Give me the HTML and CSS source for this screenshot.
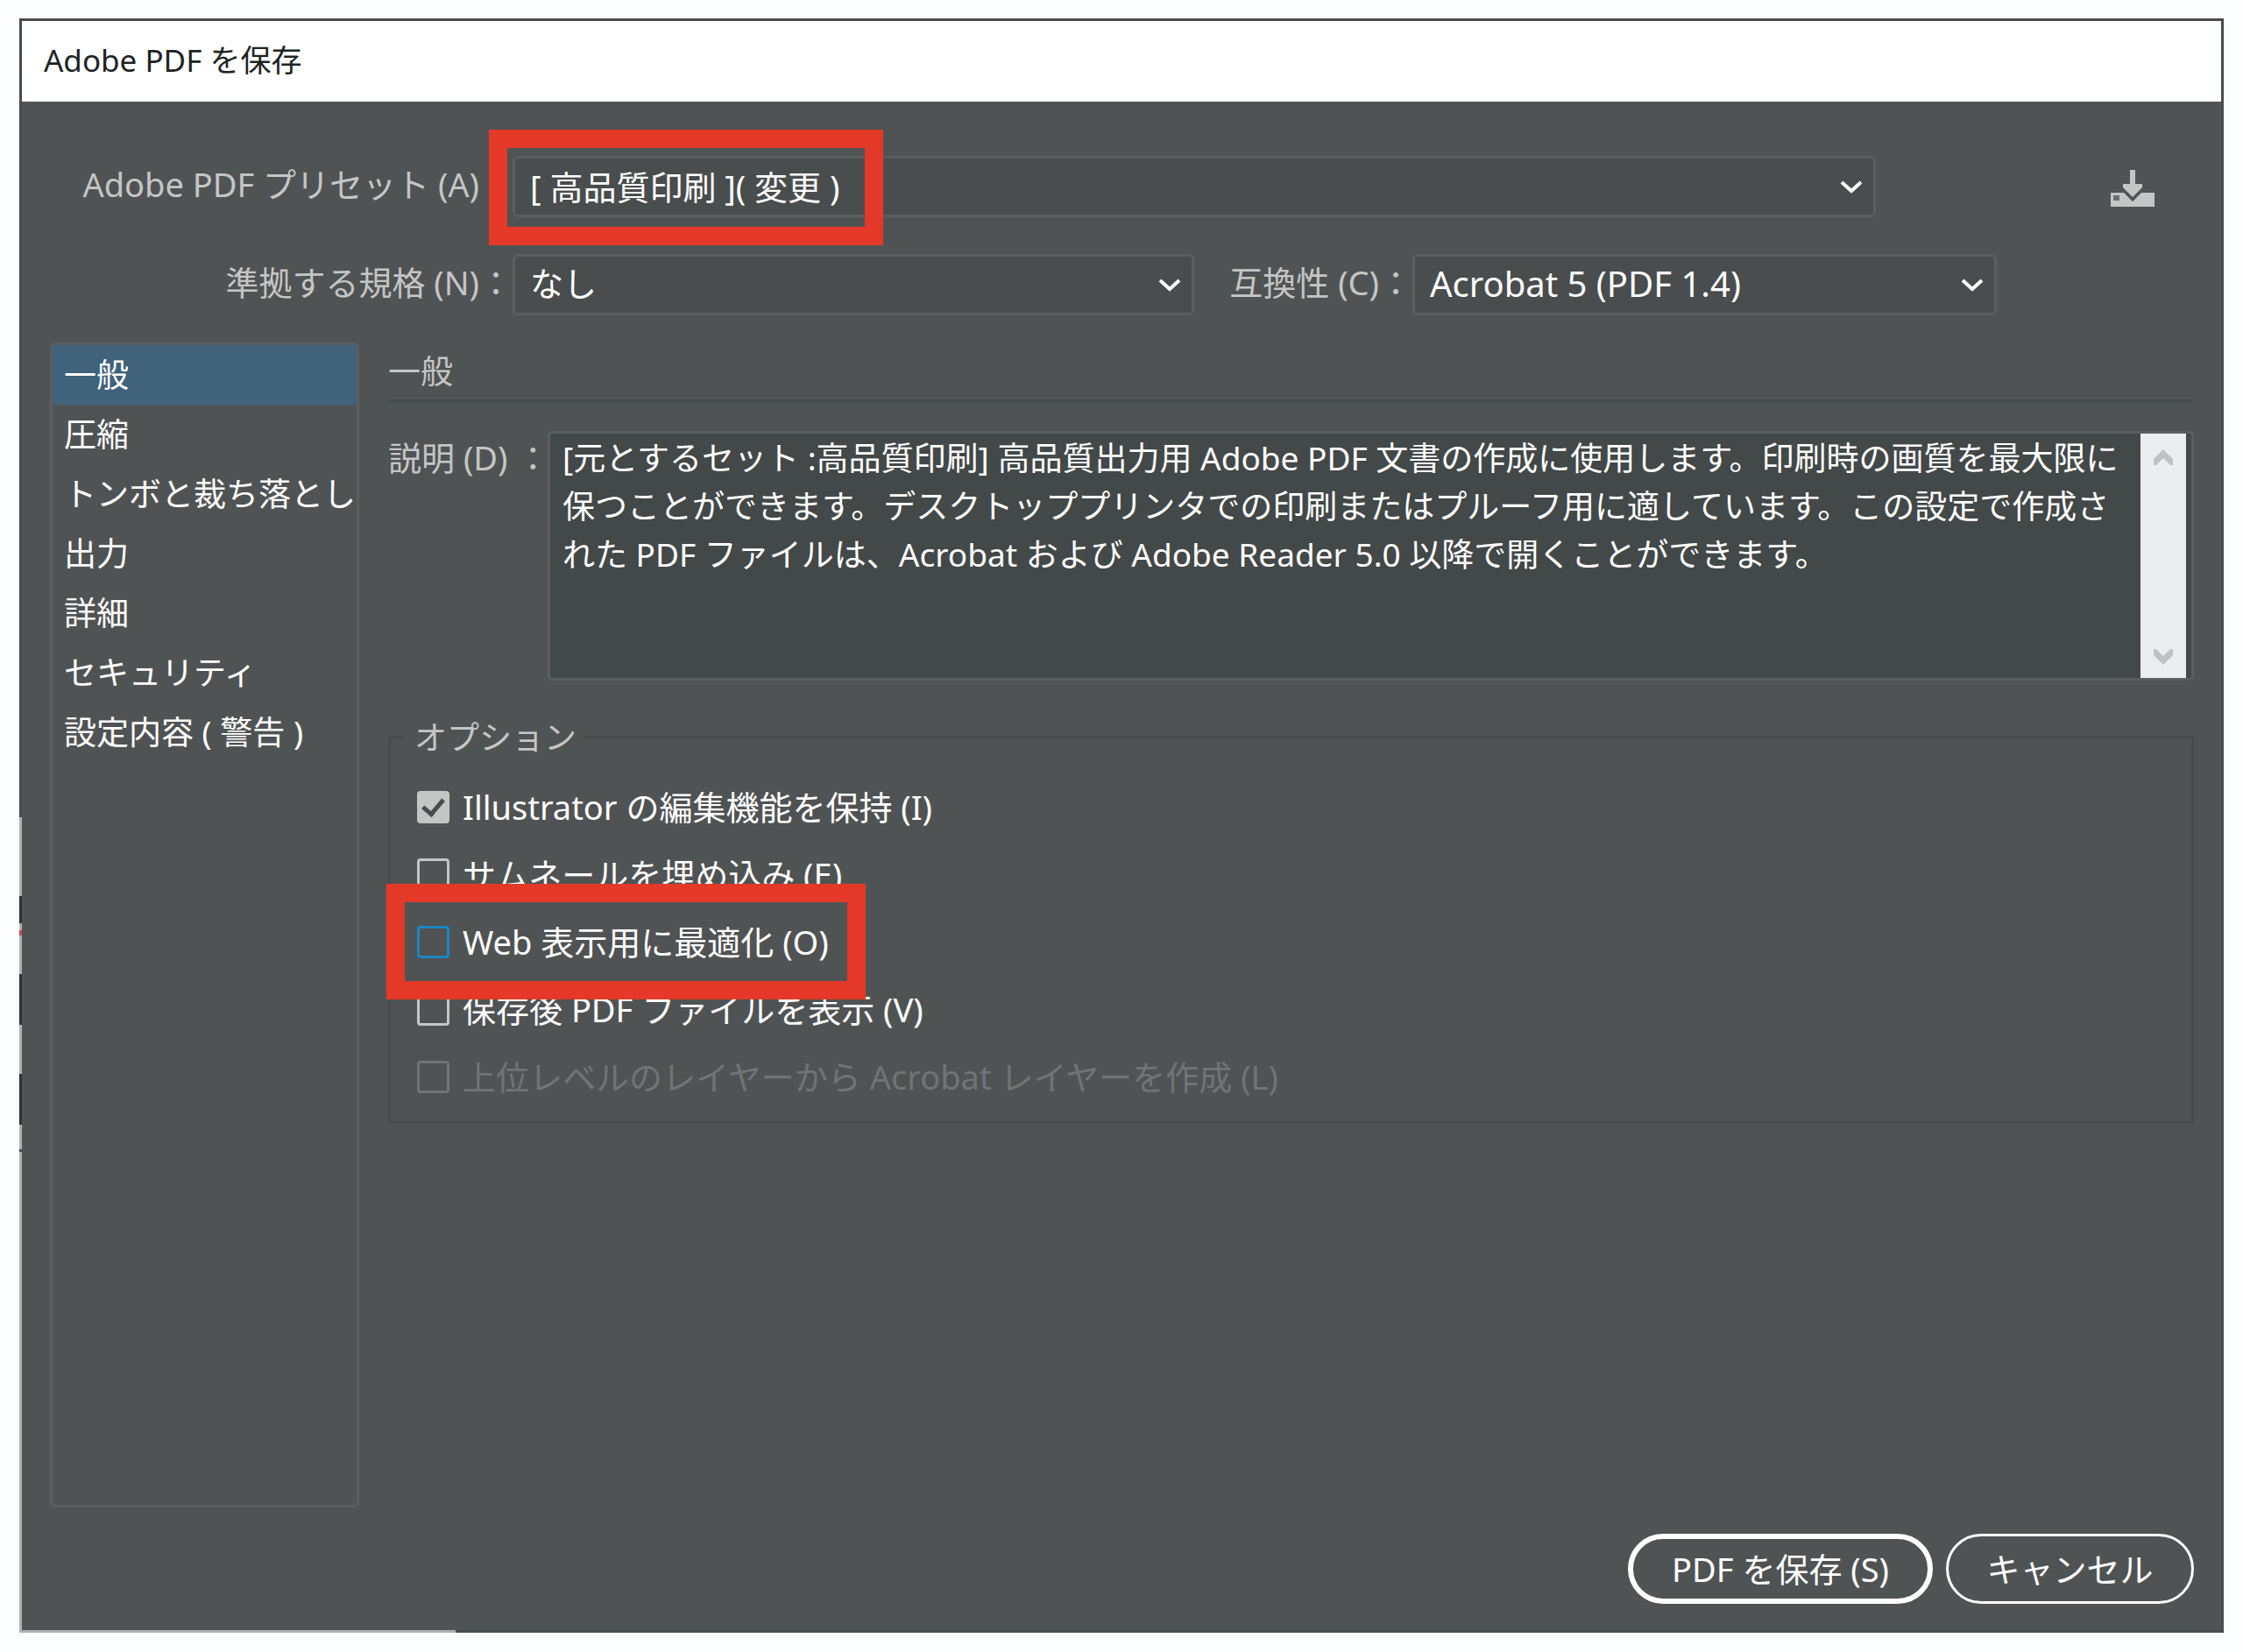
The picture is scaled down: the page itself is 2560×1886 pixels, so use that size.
FILE: index.html
```html
<!DOCTYPE html>
<html lang="ja">
<head>
<meta charset="utf-8">
<meta name="viewport" content="width=device-width, initial-scale=1">
<title>Adobe PDF を保存</title>
<link rel="stylesheet" href="styles.css">
</head>
<body>
<main class="dialog">
  <h1 class="titlebar">Adobe PDF を保存</h1>
  <form class="content">
    <div class="settings">
      <div class="row">
        <label class="row-label" for="preset">Adobe PDF プリセット (A)：</label>
        <div class="select preset">
          <select id="preset"><option>[ 高品質印刷 ]( 変更 )</option></select>
          <svg class="chevron" viewBox="0 0 26 16" aria-hidden="true"><path d="M2 3l11 10L24 3"/></svg>
          <span class="marker marker-preset"></span>
        </div>
        <button class="save-preset" type="button" aria-label="プリセットを保存">
          <svg viewBox="0 0 50 42" aria-hidden="true">
            <path d="M0 26h15l10 10 10-10h15v16H0z"/>
            <path class="hole" d="M3 29h7v6H3z"/>
            <path d="M22 0h6v16h8v4L25 31 14 20v-4h8z"/>
          </svg>
        </button>
      </div>
      <div class="row">
        <label class="row-label" for="standard">準拠する規格 (N)：</label>
        <div class="select standard">
          <select id="standard"><option>なし</option></select>
          <svg class="chevron" viewBox="0 0 26 16" aria-hidden="true"><path d="M2 3l11 10L24 3"/></svg>
        </div>
        <label class="compat-label" for="compat">互換性 (C)：</label>
        <div class="select compat">
          <select id="compat"><option>Acrobat 5 (PDF 1.4)</option></select>
          <svg class="chevron" viewBox="0 0 26 16" aria-hidden="true"><path d="M2 3l11 10L24 3"/></svg>
        </div>
      </div>
    </div>

    <div class="panes">
      <nav class="categories">
        <a class="category selected" href="#general" aria-current="page">一般</a>
        <a class="category" href="#compression">圧縮</a>
        <a class="category" href="#marks">トンボと裁ち落とし</a>
        <a class="category" href="#output">出力</a>
        <a class="category" href="#advanced">詳細</a>
        <a class="category" href="#security">セキュリティ</a>
        <a class="category" href="#summary">設定内容 ( 警告 )</a>
      </nav>
      <section class="pane" id="general">
        <h2 class="pane-title">一般</h2>
        <div class="description">
          <label class="description-label" for="description">説明 (D) ：</label>
          <div class="description-box">
            <textarea id="description" wrap="off">[元とするセット :高品質印刷] 高品質出力用 Adobe PDF 文書の作成に使用します。印刷時の画質を最大限に
保つことができます。デスクトッププリンタでの印刷またはプルーフ用に適しています。この設定で作成さ
れた PDF ファイルは、Acrobat および Adobe Reader 5.0 以降で開くことができます。</textarea>
            <div class="scrollbar">
              <button type="button" aria-label="上へスクロール"><svg viewBox="0 0 22 18" aria-hidden="true"><path d="M0 11L11 0l11 11v7h-3l-8-8-8 8H0z"/></svg></button>
              <button type="button" aria-label="下へスクロール"><svg viewBox="0 0 22 18" aria-hidden="true"><path d="M0 7l11 11L22 7V0h-3l-8 8-8-8H0z"/></svg></button>
            </div>
          </div>
        </div>
        <fieldset class="options">
          <legend>オプション</legend>
          <label class="option"><input type="checkbox" checked>Illustrator の編集機能を保持 (I)</label>
          <label class="option"><input type="checkbox">サムネールを埋め込み (E)</label>
          <label class="option focused"><input type="checkbox">Web 表示用に最適化 (O)<span class="marker marker-web"></span></label>
          <label class="option"><input type="checkbox">保存後 PDF ファイルを表示 (V)</label>
          <label class="option disabled"><input type="checkbox" disabled>上位レベルのレイヤーから Acrobat レイヤーを作成 (L)</label>
        </fieldset>
      </section>
    </div>

    <div class="actions">
      <button class="action primary" type="submit">PDF を保存 (S)</button>
      <button class="action" type="button">キャンセル</button>
    </div>
  </form>
</main>
</body>
</html>
```
FILE: styles.css
```css
* {
  box-sizing: border-box;
}

body {
  margin: 0;
  padding: 21px 22px 22px;
  min-height: 100vh;
  display: flex;
  background: #fcfdff;
  color: #ffffff;
  font-family: "Noto Sans", "Noto Sans CJK JP", sans-serif;
  font-size: 37px;
  line-height: 55px;
}

button,
select,
textarea {
  margin: 0;
  font: inherit;
  color: inherit;
}

.dialog {
  position: relative;
  flex: 1;
  min-width: 0;
  display: flex;
  flex-direction: column;
  border: 3px solid #474c4c;
  background: #505354;
}

/* Parts of the window behind show along the left and bottom edges. */
.dialog::before,
.dialog::after {
  content: "";
  position: absolute;
  left: -3px;
}

.dialog::before {
  top: -3px;
  bottom: -3px;
  width: 3px;
  background: linear-gradient(
    #474c4c 912px, #b0b2b2 912px 1002px,
    #263636 1002px 1033px, #b0b2b2 1033px 1041px,
    #d84040 1041px 1047px, #b0b2b2 1047px 1091px,
    #263636 1091px 1149px, #b0b2b2 1149px 1205px,
    #263636 1205px 1263px, #b0b2b2 1263px 1291px,
    #474c4c 1291px 1294px, #b0b2b2 1294px
  );
}

.dialog::after {
  bottom: -3px;
  width: 498px;
  height: 3px;
  background: #b0b2b2;
}

.titlebar {
  margin: 0;
  padding: 0 25px;
  height: 92px;
  background: #ffffff;
  color: #1d2424;
  font-size: 35px;
  font-weight: 400;
  line-height: 90px;
}

.content {
  flex: 1;
  display: flex;
  flex-direction: column;
  padding: 62px 31px 30px 32px;
}

.settings {
  display: flex;
  flex-direction: column;
  gap: 42px;
  margin-bottom: 31px;
  color: #c4c6c6;
  font-size: 38px;
}

.row {
  display: flex;
  align-items: center;
  height: 70px;
}

.row-label,
.compat-label {
  padding-bottom: 5px;
  text-align: right;
  white-space: nowrap;
}

.row-label {
  width: 528px;
}

.compat-label {
  width: 249px;
}

.select {
  position: relative;
  display: grid;
  align-items: center;
  min-width: 0;
  color: #ffffff;
}

.select select {
  grid-area: 1 / 1;
  width: 100%;
  height: 70px;
  padding: 0 60px 0 17px;
  border: 3px solid #5a5e5e;
  border-radius: 6px;
  background: #494d4d;
  appearance: none;
}

.standard select,
.compat select {
  padding-bottom: 4px;
}

.chevron {
  grid-area: 1 / 1;
  justify-self: end;
  width: 26px;
  height: 16px;
  margin-right: 15px;
  fill: none;
  stroke: #ffffff;
  stroke-width: 4;
  pointer-events: none;
}

.preset {
  flex: 1;
}

.save-preset {
  margin: 4px 45px 0 268px;
  padding: 0;
  width: 50px;
  height: 42px;
  border: 0;
  background: none;
  fill: #c4c6c6;
}

.save-preset svg {
  display: block;
  width: 50px;
  height: 42px;
}

.save-preset .hole {
  fill: #6b6e6f;
}

.standard {
  flex: 778 1 0;
}

.compat {
  flex: 667 1 0;
  margin-right: 225px;
  font-size: 40px;
}

.marker {
  position: absolute;
  border: 21px solid #e43928;
  pointer-events: none;
}

.marker-preset {
  left: -27px;
  top: -30px;
  width: 450px;
  height: 132px;
}

.marker-web {
  left: -35px;
  top: -28px;
  width: 547px;
  height: 132px;
}

.panes {
  flex: 1;
  display: flex;
  gap: 33px;
}

.categories {
  width: 353px;
  border: 3px solid #5a5e5e;
  border-radius: 6px;
}

.category {
  display: block;
  height: 68px;
  padding-left: 13px;
  color: #ffffff;
  line-height: 67px;
  text-decoration: none;
  white-space: nowrap;
}

.category.selected {
  background: #40627b;
}

.pane {
  flex: 1;
  min-width: 0;
}

.pane-title {
  margin: 0 0 33px;
  border-bottom: 3px solid #474c4c;
  color: #c4c6c6;
  font-size: 37px;
  font-weight: 400;
  line-height: 65px;
}

.description {
  display: flex;
  margin-bottom: 37px;
}

.description-label {
  width: 182px;
  padding-top: 3px;
  color: #c4c6c6;
  font-size: 38px;
  white-space: nowrap;
}

.description-box {
  flex: 1;
  display: flex;
  height: 285px;
  padding-right: 6px;
  border: 3px solid #5a5e5e;
  border-radius: 6px;
  background: #434848;
}

.description-box textarea {
  flex: 1;
  min-width: 0;
  padding: 0 0 0 14px;
  border: 0;
  outline: 0;
  background: none;
  overflow: hidden;
  resize: none;
  white-space: pre;
}

.scrollbar {
  display: flex;
  flex-direction: column;
  justify-content: space-between;
  width: 52px;
  padding: 16px 0 13px;
  background: #ecedef;
}

.scrollbar button {
  display: grid;
  place-items: center;
  height: 22px;
  padding: 0;
  border: 0;
  background: none;
  fill: #c0c1c2;
}

.scrollbar svg {
  width: 22px;
  height: 18px;
}

.options {
  margin: 0;
  padding: 14px 30px 12px;
  border: 3px solid #484c4c;
}

.options legend {
  margin-left: -13px;
  padding: 0 10px;
  color: #c4c6c6;
}

.option {
  position: relative;
  display: flex;
  align-items: center;
  width: max-content;
  height: 77px;
  gap: 15px;
  font-size: 38px;
}

.option input {
  display: grid;
  place-items: center;
  width: 37px;
  height: 37px;
  margin: 0;
  border: 3px solid #c4c6c6;
  border-radius: 4px;
  appearance: none;
}

.option input:checked {
  background: #c4c6c6;
}

.option input:checked::before {
  content: "";
  width: 10px;
  height: 19px;
  margin-bottom: 5px;
  border: solid #474c4c;
  border-width: 0 5px 5px 0;
  transform: rotate(40deg);
}

.focused {
  z-index: 1;
}

.option.focused input {
  border-color: #1b87c0;
}

.disabled {
  color: #717475;
}

.option.disabled input {
  border-color: #717475;
}

.actions {
  display: flex;
  justify-content: flex-end;
  gap: 15px;
  margin-top: 30px;
}

.action {
  width: 283px;
  height: 80px;
  padding: 0;
  border: 3px solid #ffffff;
  border-radius: 40px;
  background: none;
  font-size: 38px;
}

.action.primary {
  width: 348px;
  border-width: 6px;
}
```
